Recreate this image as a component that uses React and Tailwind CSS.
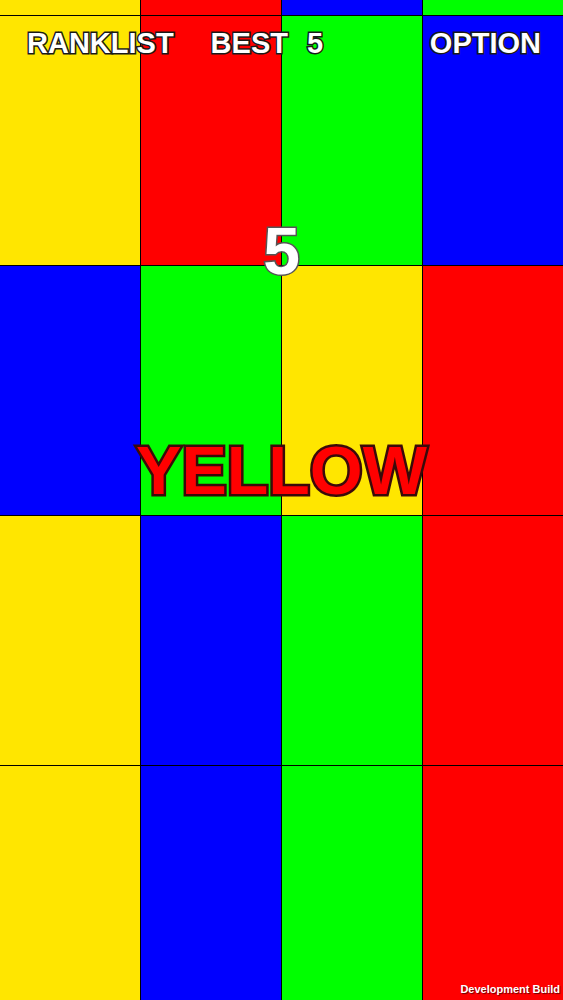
import React from 'react';

const Y = 'bg-[#ffe600]';
const R = 'bg-[#ff0000]';
const G = 'bg-[#00ff00]';
const B = 'bg-[#0000ff]';

const ROWS = [
  { h: 'h-[15px]', cells: [Y, R, B, G] },
  { h: 'h-[249px]', cells: [Y, R, G, B] },
  { h: 'h-[249px]', cells: [B, G, Y, R] },
  { h: 'h-[249px]', cells: [Y, B, G, R] },
  { h: 'h-[234px]', cells: [Y, B, G, R] },
];

const outline = '[paint-order:stroke_fill] [-webkit-text-stroke:3px_#1a1a1a]';

export default function App() {
  return (
    <div className="relative w-[563px] h-[1000px] overflow-hidden bg-black font-['Liberation_Sans',Arial,sans-serif]">
      <div className="flex flex-col gap-px">
        {ROWS.map((row, i) => (
          <div key={i} className={`grid grid-cols-4 gap-px ${row.h}`}>
            {row.cells.map((c, j) => (
              <div key={j} className={c} />
            ))}
          </div>
        ))}
      </div>

      {/* top bar */}
      <div className={`absolute top-[29px] left-0 right-0 flex items-start pl-[27px] pr-[22px] text-[29px] leading-none font-bold text-white ${outline}`}>
        <span>RANKLIST</span>
        <span className="ml-[37px]">BEST</span>
        <span className="ml-[19px]">5</span>
        <span className="ml-auto">OPTION</span>
      </div>

      {/* score */}
      <div className="absolute top-[218px] left-0 right-0 text-center text-[66px] leading-none font-bold text-white [paint-order:stroke_fill] [-webkit-text-stroke:3px_#555]">
        5
      </div>

      {/* color word */}
      <div className="absolute top-[436px] left-0 right-0 text-center text-[68px] leading-none font-bold text-[#ff0000] [paint-order:stroke_fill] [-webkit-text-stroke:5px_#3a0a0a]">
        YELLOW
      </div>

      <div className="absolute bottom-[5px] right-[3px] text-[11px] leading-none font-bold text-white [text-shadow:1px_1px_1px_rgba(0,0,0,0.6)]">
        Development Build
      </div>
    </div>
  );
}
